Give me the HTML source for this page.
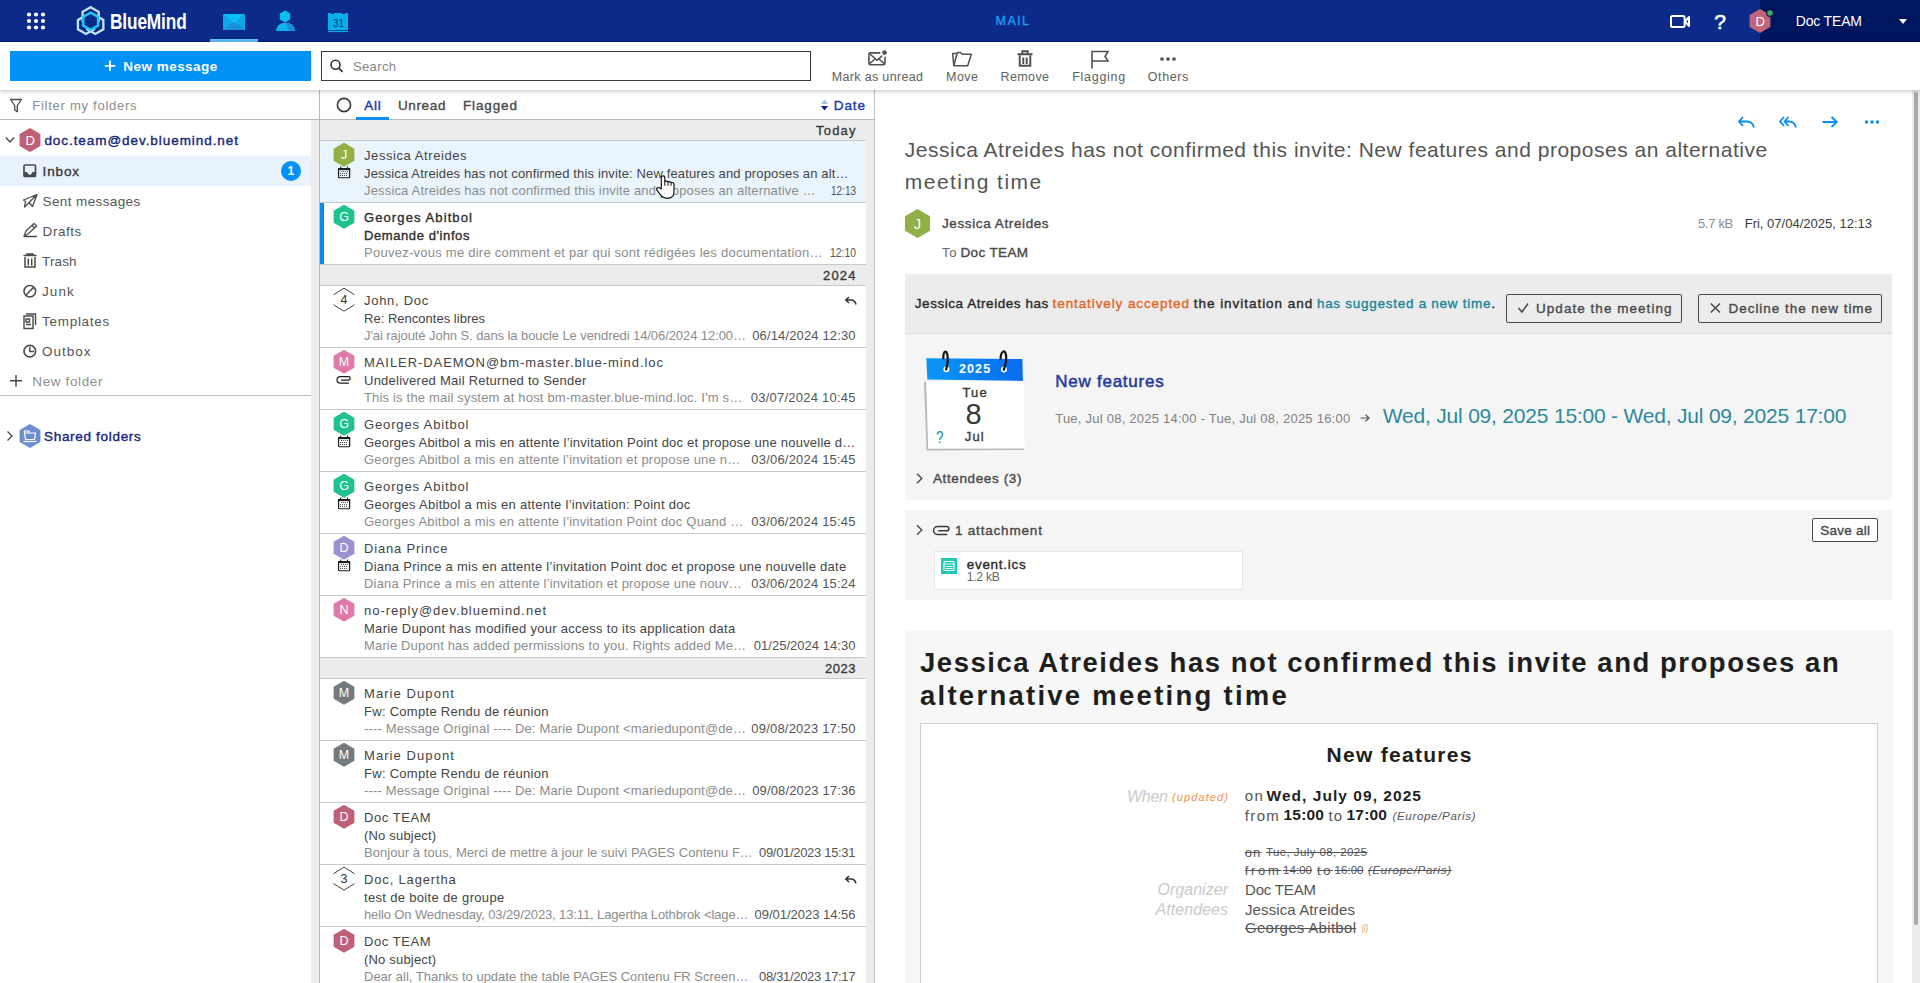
<!DOCTYPE html>
<html><head><meta charset="utf-8"><title>BlueMind Mail</title><style>*{margin:0;padding:0;box-sizing:border-box}
html,body{width:1920px;height:983px;overflow:hidden;background:#fff;font-family:"Liberation Sans",sans-serif;color:#333;position:relative}
.a{position:absolute}
.t{position:absolute;white-space:nowrap;line-height:1}
svg{position:absolute;overflow:visible}</style></head><body><div class="a" style="left:311px;top:120px;width:8px;height:863px;background:#ececec"></div><div class="a" style="left:319px;top:90px;width:1px;height:893px;background:#b9b9b9"></div><div class="a" style="left:0;top:119px;width:319px;height:1px;background:#b9b9b9"></div><div class="a" style="left:0;top:156px;width:311px;height:30px;background:#e9f3fd"></div><div class="a" style="left:0;top:395px;width:311px;height:1px;background:#bdbdbd"></div><svg style="left:0;top:0" width="320" height="460">
<path d="M10.5 99.5 H21.5 L17.3 105.5 V111.8 L14.7 109.8 V105.5 Z" fill="none" stroke="#4a4a4a" stroke-width="1.3" stroke-linejoin="round"/>
<path d="M5.8 137.5 L10 142 L14.2 137.5" fill="none" stroke="#444" stroke-width="1.3"/>
<polygon points="30.00,128.00 40.39,134.00 40.39,146.00 30.00,152.00 19.61,146.00 19.61,134.00" fill="#bf6079"/>
<rect x="24" y="165" width="11.5" height="11.5" rx="1" fill="none" stroke="#4a4a4a" stroke-width="1.7"/>
<path d="M24 172 H27 Q28 175 29.75 175 Q31.5 175 32.5 172 H35.5 V176.5 H24 Z" fill="#4a4a4a"/>
<path d="M23.5 200 L37 194.5 L32.5 206.5 L29 202.5 L24.5 207 L25.5 201.5 Z M29 202.5 L37 194.5" fill="none" stroke="#4a4a4a" stroke-width="1.3" stroke-linejoin="round"/>
<path d="M24 236.5 L26 231 L34 223.5 L36.5 226 L28.5 233.5 Z M24 236.5 H37 M32 225.5 L34.5 228" fill="none" stroke="#4a4a4a" stroke-width="1.3" stroke-linejoin="round"/>
<path d="M23.5 255.5 H36.5 M27 255 V254 H33 V255 M25 257 V267 H35 V257 M28.3 258.5 V265.5 M31.7 258.5 V265.5" fill="none" stroke="#4a4a4a" stroke-width="1.5"/>
<circle cx="29.8" cy="291.2" r="5.8" fill="none" stroke="#4a4a4a" stroke-width="1.5"/><path d="M26 295 L33.6 287.4" stroke="#4a4a4a" stroke-width="1.5"/>
<path d="M26 314 H35.5 V325 M24 316 H33 V328.5 H24 Z M26 319 H29.5 V322 H26 Z M26 324.5 H31" fill="none" stroke="#4a4a4a" stroke-width="1.4"/>
<circle cx="29.8" cy="351.2" r="5.8" fill="none" stroke="#4a4a4a" stroke-width="1.6"/><path d="M29.8 347 V351.5 H34" fill="none" stroke="#4a4a4a" stroke-width="1.5"/>
<path d="M16 375 V386.7 M10 380.8 H22" stroke="#444" stroke-width="1.4"/>
<path d="M7.5 431.5 L12 436 L7.5 440.5" fill="none" stroke="#444" stroke-width="1.3"/>
<polygon points="30.00,424.00 40.39,430.00 40.39,442.00 30.00,448.00 19.61,442.00 19.61,430.00" fill="#6d8fd2"/>
<path d="M24.5 433 H35.5 L34.5 439.5 H25.5 Z M24.5 433 V431 H28.5 L29.5 432" fill="none" stroke="#fff" stroke-width="1.2"/>
<path d="M23.5 441.5 H36.5" stroke="#fff" stroke-width="1.2"/>
</svg><div class="a" style="left:281px;top:161px;width:20px;height:20px;border-radius:50%;background:#0092f6"></div><div class="t" style="left:287.50px;top:165.44px;font-size:12px;color:#fff;font-weight:700;">1</div><div class="t" style="left:25.60px;top:134.00px;font-size:13px;color:#fff;">D</div><div class="t" style="left:32.30px;top:99.30px;font-size:13px;color:#8c8c8c;letter-spacing:0.733px;">Filter my folders</div><div class="t" style="left:44.40px;top:133.57px;font-size:13.5px;color:#14277c;letter-spacing:0.939px;-webkit-text-stroke:0.38px #14277c;">doc.team@dev.bluemind.net</div><div class="t" style="left:42.60px;top:164.97px;font-size:13.5px;color:#3a3a3a;letter-spacing:0.867px;-webkit-text-stroke:0.38px #3a3a3a;">Inbox</div><div class="t" style="left:42.60px;top:194.77px;font-size:13.5px;color:#555;letter-spacing:0.378px;">Sent messages</div><div class="t" style="left:42.60px;top:224.97px;font-size:13.5px;color:#555;letter-spacing:0.537px;">Drafts</div><div class="t" style="left:42.10px;top:255.37px;font-size:13.5px;color:#555;letter-spacing:0.096px;">Trash</div><div class="t" style="left:42.10px;top:285.37px;font-size:13.5px;color:#555;letter-spacing:1.023px;">Junk</div><div class="t" style="left:42.10px;top:315.37px;font-size:13.5px;color:#555;letter-spacing:0.696px;">Templates</div><div class="t" style="left:42.10px;top:345.37px;font-size:13.5px;color:#555;letter-spacing:0.974px;">Outbox</div><div class="t" style="left:32.30px;top:374.57px;font-size:13.5px;color:#8f8f8f;letter-spacing:0.630px;">New folder</div><div class="t" style="left:44.00px;top:429.57px;font-size:13.5px;color:#14277c;letter-spacing:0.691px;-webkit-text-stroke:0.38px #14277c;">Shared folders</div><div class="a" style="left:320px;top:90px;width:555px;height:893px;background:#fff"></div><div class="a" style="left:866px;top:120px;width:9px;height:863px;background:#ececec"></div><div class="a" style="left:874px;top:90px;width:1px;height:893px;background:#c2c2c2"></div><div class="a" style="left:320px;top:119px;width:555px;height:1px;background:#b9b9b9"></div><div class="a" style="left:320px;top:120px;width:546px;height:21px;background:#ececec;border-bottom:1px solid #c8c8c8"></div><div class="a" style="left:320px;top:141px;width:546px;height:62px;background:#eaf4fd;border-bottom:1px solid #c8c8c8"></div><div class="a" style="left:320px;top:203px;width:546px;height:62px;background:#fff;border-bottom:1px solid #c8c8c8"></div><div class="a" style="left:320px;top:203px;width:4px;height:61px;background:#0a8cf0"></div><div class="a" style="left:320px;top:265px;width:546px;height:21px;background:#ececec;border-bottom:1px solid #c8c8c8"></div><div class="a" style="left:320px;top:286px;width:546px;height:62px;background:#fff;border-bottom:1px solid #c8c8c8"></div><div class="a" style="left:320px;top:348px;width:546px;height:62px;background:#fff;border-bottom:1px solid #c8c8c8"></div><div class="a" style="left:320px;top:410px;width:546px;height:62px;background:#fff;border-bottom:1px solid #c8c8c8"></div><div class="a" style="left:320px;top:472px;width:546px;height:62px;background:#fff;border-bottom:1px solid #c8c8c8"></div><div class="a" style="left:320px;top:534px;width:546px;height:62px;background:#fff;border-bottom:1px solid #c8c8c8"></div><div class="a" style="left:320px;top:596px;width:546px;height:62px;background:#fff;border-bottom:1px solid #c8c8c8"></div><div class="a" style="left:320px;top:658px;width:546px;height:21px;background:#ececec;border-bottom:1px solid #c8c8c8"></div><div class="a" style="left:320px;top:679px;width:546px;height:62px;background:#fff;border-bottom:1px solid #c8c8c8"></div><div class="a" style="left:320px;top:741px;width:546px;height:62px;background:#fff;border-bottom:1px solid #c8c8c8"></div><div class="a" style="left:320px;top:803px;width:546px;height:62px;background:#fff;border-bottom:1px solid #c8c8c8"></div><div class="a" style="left:320px;top:865px;width:546px;height:62px;background:#fff;border-bottom:1px solid #c8c8c8"></div><div class="a" style="left:320px;top:927px;width:546px;height:62px;background:#fff;border-bottom:1px solid #c8c8c8"></div><svg style="left:0;top:0" width="900" height="983"><circle cx="344" cy="105" r="6.6" fill="none" stroke="#3a3a3a" stroke-width="1.6"/><rect x="356" y="117" width="33" height="3" fill="#0a8cf0"/><path d="M821 104 L824.5 99.5 L828 104 Z" fill="#a8bce6"/><path d="M821 106 L824.5 110.5 L828 106 Z" fill="#0a1f8a"/><polygon points="344.00,142.70 354.39,148.70 354.39,160.70 344.00,166.70 333.61,160.70 333.61,148.70" fill="#92b044"/><rect x="338.55" y="168.55" width="11.1" height="9.2" rx="1" fill="none" stroke="#1e1e1e" stroke-width="1.2"/><rect x="338" y="168.0" width="12.2" height="2.1" fill="#1e1e1e"/><path d="M340.7 166.5 V168.3 M347.5 166.5 V168.3" stroke="#1e1e1e" stroke-width="1.1"/><circle cx="341.6" cy="171.5" r="0.55" fill="#1e1e1e"/><circle cx="343.6" cy="171.5" r="0.55" fill="#1e1e1e"/><circle cx="345.6" cy="171.5" r="0.55" fill="#1e1e1e"/><circle cx="347.6" cy="171.5" r="0.55" fill="#1e1e1e"/><circle cx="340.6" cy="173.5" r="0.55" fill="#1e1e1e"/><circle cx="342.6" cy="173.5" r="0.55" fill="#1e1e1e"/><circle cx="344.6" cy="173.5" r="0.55" fill="#1e1e1e"/><circle cx="346.6" cy="173.5" r="0.55" fill="#1e1e1e"/><circle cx="340.6" cy="175.5" r="0.55" fill="#1e1e1e"/><circle cx="342.6" cy="175.5" r="0.55" fill="#1e1e1e"/><circle cx="344.6" cy="175.5" r="0.55" fill="#1e1e1e"/><circle cx="346.6" cy="175.5" r="0.55" fill="#1e1e1e"/><polygon points="344.00,204.70 354.39,210.70 354.39,222.70 344.00,228.70 333.61,222.70 333.61,210.70" fill="#1fc18e"/><path d="M333.5 294.7 L344 288.2 L354.5 294.7 M333.5 304.7 L344 311.2 L354.5 304.7" fill="none" stroke="#444" stroke-width="1"/><path d="M849 297.0 L845.8 300.0 L849 303.0 M846 300.0 H851 Q855 300.0 856 304.5" fill="none" stroke="#333" stroke-width="1.5"/><polygon points="344.00,349.70 354.39,355.70 354.39,367.70 344.00,373.70 333.61,367.70 333.61,355.70" fill="#e07aaa"/><path d="M341.3 380.1 H348.4 A1.8 1.8 0 0 0 348.4 376.5 H340.4 A3.35 3.35 0 0 0 340.4 383.2 H348.4" fill="none" stroke="#1e1e1e" stroke-width="1.25" stroke-linecap="round"/><polygon points="344.00,411.70 354.39,417.70 354.39,429.70 344.00,435.70 333.61,429.70 333.61,417.70" fill="#1fc18e"/><rect x="338.55" y="437.55" width="11.1" height="9.2" rx="1" fill="none" stroke="#1e1e1e" stroke-width="1.2"/><rect x="338" y="437.0" width="12.2" height="2.1" fill="#1e1e1e"/><path d="M340.7 435.5 V437.3 M347.5 435.5 V437.3" stroke="#1e1e1e" stroke-width="1.1"/><circle cx="341.6" cy="440.5" r="0.55" fill="#1e1e1e"/><circle cx="343.6" cy="440.5" r="0.55" fill="#1e1e1e"/><circle cx="345.6" cy="440.5" r="0.55" fill="#1e1e1e"/><circle cx="347.6" cy="440.5" r="0.55" fill="#1e1e1e"/><circle cx="340.6" cy="442.5" r="0.55" fill="#1e1e1e"/><circle cx="342.6" cy="442.5" r="0.55" fill="#1e1e1e"/><circle cx="344.6" cy="442.5" r="0.55" fill="#1e1e1e"/><circle cx="346.6" cy="442.5" r="0.55" fill="#1e1e1e"/><circle cx="340.6" cy="444.5" r="0.55" fill="#1e1e1e"/><circle cx="342.6" cy="444.5" r="0.55" fill="#1e1e1e"/><circle cx="344.6" cy="444.5" r="0.55" fill="#1e1e1e"/><circle cx="346.6" cy="444.5" r="0.55" fill="#1e1e1e"/><polygon points="344.00,473.70 354.39,479.70 354.39,491.70 344.00,497.70 333.61,491.70 333.61,479.70" fill="#1fc18e"/><rect x="338.55" y="499.55" width="11.1" height="9.2" rx="1" fill="none" stroke="#1e1e1e" stroke-width="1.2"/><rect x="338" y="499.0" width="12.2" height="2.1" fill="#1e1e1e"/><path d="M340.7 497.5 V499.3 M347.5 497.5 V499.3" stroke="#1e1e1e" stroke-width="1.1"/><circle cx="341.6" cy="502.5" r="0.55" fill="#1e1e1e"/><circle cx="343.6" cy="502.5" r="0.55" fill="#1e1e1e"/><circle cx="345.6" cy="502.5" r="0.55" fill="#1e1e1e"/><circle cx="347.6" cy="502.5" r="0.55" fill="#1e1e1e"/><circle cx="340.6" cy="504.5" r="0.55" fill="#1e1e1e"/><circle cx="342.6" cy="504.5" r="0.55" fill="#1e1e1e"/><circle cx="344.6" cy="504.5" r="0.55" fill="#1e1e1e"/><circle cx="346.6" cy="504.5" r="0.55" fill="#1e1e1e"/><circle cx="340.6" cy="506.5" r="0.55" fill="#1e1e1e"/><circle cx="342.6" cy="506.5" r="0.55" fill="#1e1e1e"/><circle cx="344.6" cy="506.5" r="0.55" fill="#1e1e1e"/><circle cx="346.6" cy="506.5" r="0.55" fill="#1e1e1e"/><polygon points="344.00,535.70 354.39,541.70 354.39,553.70 344.00,559.70 333.61,553.70 333.61,541.70" fill="#9b8fcd"/><rect x="338.55" y="561.55" width="11.1" height="9.2" rx="1" fill="none" stroke="#1e1e1e" stroke-width="1.2"/><rect x="338" y="561.0" width="12.2" height="2.1" fill="#1e1e1e"/><path d="M340.7 559.5 V561.3 M347.5 559.5 V561.3" stroke="#1e1e1e" stroke-width="1.1"/><circle cx="341.6" cy="564.5" r="0.55" fill="#1e1e1e"/><circle cx="343.6" cy="564.5" r="0.55" fill="#1e1e1e"/><circle cx="345.6" cy="564.5" r="0.55" fill="#1e1e1e"/><circle cx="347.6" cy="564.5" r="0.55" fill="#1e1e1e"/><circle cx="340.6" cy="566.5" r="0.55" fill="#1e1e1e"/><circle cx="342.6" cy="566.5" r="0.55" fill="#1e1e1e"/><circle cx="344.6" cy="566.5" r="0.55" fill="#1e1e1e"/><circle cx="346.6" cy="566.5" r="0.55" fill="#1e1e1e"/><circle cx="340.6" cy="568.5" r="0.55" fill="#1e1e1e"/><circle cx="342.6" cy="568.5" r="0.55" fill="#1e1e1e"/><circle cx="344.6" cy="568.5" r="0.55" fill="#1e1e1e"/><circle cx="346.6" cy="568.5" r="0.55" fill="#1e1e1e"/><polygon points="344.00,597.70 354.39,603.70 354.39,615.70 344.00,621.70 333.61,615.70 333.61,603.70" fill="#e07aaa"/><polygon points="344.00,680.70 354.39,686.70 354.39,698.70 344.00,704.70 333.61,698.70 333.61,686.70" fill="#737b80"/><polygon points="344.00,742.70 354.39,748.70 354.39,760.70 344.00,766.70 333.61,760.70 333.61,748.70" fill="#737b80"/><polygon points="344.00,804.70 354.39,810.70 354.39,822.70 344.00,828.70 333.61,822.70 333.61,810.70" fill="#bf6079"/><path d="M333.5 873.7 L344 867.2 L354.5 873.7 M333.5 883.7 L344 890.2 L354.5 883.7" fill="none" stroke="#444" stroke-width="1"/><path d="M849 876.0 L845.8 879.0 L849 882.0 M846 879.0 H851 Q855 879.0 856 883.5" fill="none" stroke="#333" stroke-width="1.5"/><polygon points="344.00,928.70 354.39,934.70 354.39,946.70 344.00,952.70 333.61,946.70 333.61,934.70" fill="#bf6079"/></svg><div class="t" style="left:364.20px;top:99.27px;font-size:13.5px;color:#1a3aa5;letter-spacing:0.742px;-webkit-text-stroke:0.38px #1a3aa5;">All</div><div class="t" style="left:397.90px;top:99.27px;font-size:13.5px;color:#4a4a4a;letter-spacing:0.644px;-webkit-text-stroke:0.38px #4a4a4a;">Unread</div><div class="t" style="left:463.00px;top:99.27px;font-size:13.5px;color:#4a4a4a;letter-spacing:0.867px;-webkit-text-stroke:0.38px #4a4a4a;">Flagged</div><div class="t" style="left:833.75px;top:99.27px;font-size:13.5px;color:#1a3aa5;letter-spacing:0.923px;-webkit-text-stroke:0.38px #1a3aa5;">Date</div><div class="t" style="left:816.10px;top:124.30px;font-size:13px;color:#3a3a3a;letter-spacing:1.174px;-webkit-text-stroke:0.36px #3a3a3a;">Today</div><div class="t" style="left:344.00px;top:148.72px;font-size:12.5px;color:#fff;transform:translateX(-50%);">J</div><div class="t" style="left:364.00px;top:148.70px;font-size:13px;color:#444;letter-spacing:0.577px;">Jessica Atreides</div><div class="t" style="left:364.00px;top:166.80px;font-size:13px;color:#444;letter-spacing:0.139px;">Jessica Atreides has not confirmed this invite: New features and proposes an alt…</div><div class="t" style="left:364.00px;top:184.00px;font-size:13px;color:#8c8c8c;letter-spacing:0.163px;">Jessica Atreides has not confirmed this invite and proposes an alternative …</div><div class="t" style="left:830.50px;top:184.00px;font-size:13px;color:#555;transform:scaleX(0.7681);transform-origin:0 0;">12:13</div><div class="t" style="left:344.00px;top:210.72px;font-size:12.5px;color:#fff;transform:translateX(-50%);">G</div><div class="t" style="left:364.00px;top:210.70px;font-size:13px;color:#2e2e2e;letter-spacing:1.099px;-webkit-text-stroke:0.36px #2e2e2e;">Georges Abitbol</div><div class="t" style="left:364.00px;top:228.80px;font-size:13px;color:#2e2e2e;letter-spacing:0.589px;-webkit-text-stroke:0.36px #2e2e2e;">Demande d&#x27;infos</div><div class="t" style="left:364.00px;top:246.00px;font-size:13px;color:#8c8c8c;letter-spacing:0.253px;">Pouvez-vous me dire comment et par qui sont rédigées les documentation…</div><div class="t" style="left:829.60px;top:246.00px;font-size:13px;color:#555;transform:scaleX(0.7958);transform-origin:0 0;">12:10</div><div class="t" style="left:823.10px;top:268.70px;font-size:13px;color:#3a3a3a;letter-spacing:1.159px;-webkit-text-stroke:0.36px #3a3a3a;">2024</div><div class="t" style="left:344.00px;top:293.72px;font-size:12.5px;color:#333;transform:translateX(-50%);">4</div><div class="t" style="left:364.00px;top:293.70px;font-size:13px;color:#444;letter-spacing:0.707px;">John, Doc</div><div class="t" style="left:364.00px;top:311.80px;font-size:13px;color:#444;letter-spacing:0.017px;">Re: Rencontes libres</div><div class="t" style="left:364.00px;top:329.00px;font-size:13px;color:#8c8c8c;letter-spacing:-0.078px;">J&#x27;ai rajouté John S. dans la boucle Le vendredi 14/06/2024 12:00…</div><div class="t" style="left:752.20px;top:329.00px;font-size:13px;color:#555;letter-spacing:0.139px;">06/14/2024 12:30</div><div class="t" style="left:344.00px;top:355.72px;font-size:12.5px;color:#fff;transform:translateX(-50%);">M</div><div class="t" style="left:364.00px;top:355.70px;font-size:13px;color:#444;letter-spacing:0.935px;">MAILER-DAEMON@bm-master.blue-mind.loc</div><div class="t" style="left:364.00px;top:373.80px;font-size:13px;color:#444;letter-spacing:0.247px;">Undelivered Mail Returned to Sender</div><div class="t" style="left:364.00px;top:391.00px;font-size:13px;color:#8c8c8c;letter-spacing:0.177px;">This is the mail system at host bm-master.blue-mind.loc. I&#x27;m s…</div><div class="t" style="left:750.70px;top:391.00px;font-size:13px;color:#555;letter-spacing:0.239px;">03/07/2024 10:45</div><div class="t" style="left:344.00px;top:417.72px;font-size:12.5px;color:#fff;transform:translateX(-50%);">G</div><div class="t" style="left:364.00px;top:417.70px;font-size:13px;color:#444;letter-spacing:0.856px;">Georges Abitbol</div><div class="t" style="left:364.00px;top:435.80px;font-size:13px;color:#444;letter-spacing:0.221px;">Georges Abitbol a mis en attente l’invitation Point doc et propose une nouvelle d…</div><div class="t" style="left:364.00px;top:453.00px;font-size:13px;color:#8c8c8c;letter-spacing:0.205px;">Georges Abitbol a mis en attente l’invitation et propose une n…</div><div class="t" style="left:751.30px;top:453.00px;font-size:13px;color:#555;letter-spacing:0.199px;">03/06/2024 15:45</div><div class="t" style="left:344.00px;top:479.72px;font-size:12.5px;color:#fff;transform:translateX(-50%);">G</div><div class="t" style="left:364.00px;top:479.70px;font-size:13px;color:#444;letter-spacing:0.856px;">Georges Abitbol</div><div class="t" style="left:364.00px;top:497.80px;font-size:13px;color:#444;letter-spacing:0.281px;">Georges Abitbol a mis en attente l’invitation: Point doc</div><div class="t" style="left:364.00px;top:515.00px;font-size:13px;color:#8c8c8c;letter-spacing:0.207px;">Georges Abitbol a mis en attente l’invitation Point doc Quand …</div><div class="t" style="left:751.30px;top:515.00px;font-size:13px;color:#555;letter-spacing:0.199px;">03/06/2024 15:45</div><div class="t" style="left:344.00px;top:541.72px;font-size:12.5px;color:#fff;transform:translateX(-50%);">D</div><div class="t" style="left:364.00px;top:541.70px;font-size:13px;color:#444;letter-spacing:0.815px;">Diana Prince</div><div class="t" style="left:364.00px;top:559.80px;font-size:13px;color:#444;letter-spacing:0.273px;">Diana Prince a mis en attente l’invitation Point doc et propose une nouvelle date</div><div class="t" style="left:364.00px;top:577.00px;font-size:13px;color:#8c8c8c;letter-spacing:0.182px;">Diana Prince a mis en attente l’invitation et propose une nouv…</div><div class="t" style="left:751.30px;top:577.00px;font-size:13px;color:#555;letter-spacing:0.199px;">03/06/2024 15:24</div><div class="t" style="left:344.00px;top:603.72px;font-size:12.5px;color:#fff;transform:translateX(-50%);">N</div><div class="t" style="left:364.00px;top:603.70px;font-size:13px;color:#444;letter-spacing:0.991px;">no-reply@dev.bluemind.net</div><div class="t" style="left:364.00px;top:621.80px;font-size:13px;color:#444;letter-spacing:0.285px;">Marie Dupont has modified your access to its application data</div><div class="t" style="left:364.00px;top:639.00px;font-size:13px;color:#8c8c8c;letter-spacing:0.159px;">Marie Dupont has added permissions to you. Rights added Me…</div><div class="t" style="left:753.70px;top:639.00px;font-size:13px;color:#555;letter-spacing:0.039px;">01/25/2024 14:30</div><div class="t" style="left:824.90px;top:661.70px;font-size:13px;color:#3a3a3a;letter-spacing:0.559px;-webkit-text-stroke:0.36px #3a3a3a;">2023</div><div class="t" style="left:344.00px;top:686.72px;font-size:12.5px;color:#fff;transform:translateX(-50%);">M</div><div class="t" style="left:364.00px;top:686.70px;font-size:13px;color:#444;letter-spacing:1.078px;">Marie Dupont</div><div class="t" style="left:364.00px;top:704.80px;font-size:13px;color:#444;letter-spacing:0.283px;">Fw: Compte Rendu de réunion</div><div class="t" style="left:364.00px;top:722.00px;font-size:13px;color:#8c8c8c;letter-spacing:0.159px;">---- Message Original ---- De: Marie Dupont &lt;mariedupont@de…</div><div class="t" style="left:751.30px;top:722.00px;font-size:13px;color:#555;letter-spacing:0.199px;">09/08/2023 17:50</div><div class="t" style="left:344.00px;top:748.72px;font-size:12.5px;color:#fff;transform:translateX(-50%);">M</div><div class="t" style="left:364.00px;top:748.70px;font-size:13px;color:#444;letter-spacing:1.078px;">Marie Dupont</div><div class="t" style="left:364.00px;top:766.80px;font-size:13px;color:#444;letter-spacing:0.283px;">Fw: Compte Rendu de réunion</div><div class="t" style="left:364.00px;top:784.00px;font-size:13px;color:#8c8c8c;letter-spacing:0.159px;">---- Message Original ---- De: Marie Dupont &lt;mariedupont@de…</div><div class="t" style="left:752.20px;top:784.00px;font-size:13px;color:#555;letter-spacing:0.139px;">09/08/2023 17:36</div><div class="t" style="left:344.00px;top:810.72px;font-size:12.5px;color:#fff;transform:translateX(-50%);">D</div><div class="t" style="left:364.00px;top:810.70px;font-size:13px;color:#444;letter-spacing:0.584px;">Doc TEAM</div><div class="t" style="left:364.00px;top:828.80px;font-size:13px;color:#444;letter-spacing:0.193px;">(No subject)</div><div class="t" style="left:364.00px;top:846.00px;font-size:13px;color:#8c8c8c;letter-spacing:0.052px;">Bonjour à tous, Merci de mettre à jour le suivi PAGES Contenu F…</div><div class="t" style="left:759.00px;top:846.00px;font-size:13px;color:#555;letter-spacing:-0.315px;">09/01/2023 15:31</div><div class="t" style="left:344.00px;top:872.72px;font-size:12.5px;color:#333;transform:translateX(-50%);">3</div><div class="t" style="left:364.00px;top:872.70px;font-size:13px;color:#444;letter-spacing:0.836px;">Doc, Lagertha</div><div class="t" style="left:364.00px;top:890.80px;font-size:13px;color:#444;letter-spacing:0.327px;">test de boite de groupe</div><div class="t" style="left:364.00px;top:908.00px;font-size:13px;color:#8c8c8c;letter-spacing:-0.122px;">hello On Wednesday, 03/29/2023, 13:11, Lagertha Lothbrok &lt;lage…</div><div class="t" style="left:754.60px;top:908.00px;font-size:13px;color:#555;letter-spacing:-0.021px;">09/01/2023 14:56</div><div class="t" style="left:344.00px;top:934.72px;font-size:12.5px;color:#fff;transform:translateX(-50%);">D</div><div class="t" style="left:364.00px;top:934.70px;font-size:13px;color:#444;letter-spacing:0.584px;">Doc TEAM</div><div class="t" style="left:364.00px;top:952.80px;font-size:13px;color:#444;letter-spacing:0.193px;">(No subject)</div><div class="t" style="left:364.00px;top:970.00px;font-size:13px;color:#8c8c8c;letter-spacing:-0.003px;">Dear all, Thanks to update the table PAGES Contenu FR Screen…</div><div class="t" style="left:759.00px;top:970.00px;font-size:13px;color:#555;letter-spacing:-0.315px;">08/31/2023 17:17</div><svg style="left:0;top:0" width="900" height="983"><path d="M661.3 189 V177.5 Q661.3 175.8 663.05 175.8 Q664.8 175.8 664.8 177.5 V181.6 Q666.5 180.6 668 181.8 Q669.8 181.4 671 182.6 Q673.9 182 674 184.3 V192 Q674 198.3 667 198.3 Q663 198.3 660.6 195.2 L656.9 190.2 Q655.9 188.2 658 187.6 Q659.8 187.3 661.3 189 Z" fill="#fff" stroke="#111" stroke-width="1.15" stroke-linejoin="round"/><path d="M664.8 181.6 V185.8 M668 181.8 V185.8 M671 182.6 V185.8" stroke="#111" stroke-width="1"/></svg><div class="a" style="left:1912px;top:90px;width:8px;height:893px;background:#ececec"></div><div class="a" style="left:1914px;top:92px;width:4px;height:833px;border-radius:2px;background:#a9a9a9"></div><div class="a" style="left:905px;top:274px;width:987px;height:60px;background:#ececec;border-bottom:1px solid #dedede"></div><div class="a" style="left:905px;top:334px;width:987px;height:166px;background:#f5f5f5"></div><div class="a" style="left:905px;top:510px;width:987px;height:90px;background:#f5f5f5"></div><div class="a" style="left:905px;top:630px;width:988px;height:353px;background:#f7f7f7"></div><div class="a" style="left:920px;top:723px;width:958px;height:270px;background:#fff;border:1px solid #cfcfcf"></div><div class="a" style="left:1506px;top:293.5px;width:176px;height:29px;border:1px solid #4a4a4a;border-radius:2px"></div><div class="a" style="left:1698px;top:293.5px;width:184px;height:29px;border:1px solid #4a4a4a;border-radius:2px"></div><div class="a" style="left:1812px;top:518px;width:66px;height:24px;border:1px solid #4a4a4a;border-radius:2px;background:#fff"></div><div class="a" style="left:933.5px;top:550.5px;width:309px;height:39px;background:#fff;border:1px solid #e6e6e6"></div><svg style="left:0;top:0" width="1920" height="983"><path d="M1743 117 L1739 121.5 L1743 126 M1739.5 121.5 H1747 Q1752.5 121.5 1754 127.5" fill="none" stroke="#0a8cf0" stroke-width="1.8"/><path d="M1784 117 L1780 121.5 L1784 126 M1788.5 117 L1784.5 121.5 L1788.5 126 M1785 121.5 H1789 Q1794.5 121.5 1796 127.5" fill="none" stroke="#0a8cf0" stroke-width="1.8"/><path d="M1822.5 122 H1836.5 M1831.5 117 L1836.8 122 L1831.5 127" fill="none" stroke="#0a8cf0" stroke-width="1.8"/><circle cx="1866.5" cy="122" r="1.7" fill="#0a8cf0"/><circle cx="1872" cy="122" r="1.7" fill="#0a8cf0"/><circle cx="1877.5" cy="122" r="1.7" fill="#0a8cf0"/><polygon points="917.50,209.00 930.06,216.25 930.06,230.75 917.50,238.00 904.94,230.75 904.94,216.25" fill="#90b145"/><path d="M1518.5 308 L1522 312 L1528 303.5" fill="none" stroke="#444" stroke-width="1.4"/><path d="M1710.8 303.5 L1720 312.5 M1720 303.5 L1710.8 312.5" fill="none" stroke="#444" stroke-width="1.4"/><path d="M925 382 L927.5 449.5 L1024 449" fill="none" stroke="#b9b9b9" stroke-width="2"/><polygon points="927,381 1024,382 1024.5,448.5 928,448.5" fill="#fff"/><defs><linearGradient id="cg" x1="0" x2="1"><stop offset="0" stop-color="#0998f6"/><stop offset="1" stop-color="#0a6bf0"/></linearGradient></defs><polygon points="926.3,358.3 1022.4,359.1 1022.9,380.9 927.3,379.6" fill="url(#cg)"/><circle cx="946.4" cy="369.2" r="3" fill="#fff"/><circle cx="1003.9" cy="369.5" r="3" fill="#fff"/><path d="M946.1 369.5 Q948.6 361 947.4 355 Q946.4 350.6 944.8 351.8 Q943.2 353.4 943.3 358.3" fill="none" stroke="#161616" stroke-width="2.2" stroke-linecap="round"/><path d="M1003.8 369.8 Q1006.9 361 1006 355 Q1005.2 350.8 1003.1 351.6 Q1000.7 353 1000.6 358.6" fill="none" stroke="#161616" stroke-width="2.2" stroke-linecap="round"/><path d="M1360.5 418 H1369 M1365.5 414.8 L1369 418 L1365.5 421.2" fill="none" stroke="#555" stroke-width="1.2"/><path d="M917 473.8 L921.8 478.5 L917 483.2" fill="none" stroke="#444" stroke-width="1.3"/><path d="M917 525.3 L921.8 530 L917 534.7" fill="none" stroke="#444" stroke-width="1.3"/><path d="M938.8 530.8 H946.7 A2.1 2.1 0 0 0 946.7 526.6 H937.5 A3.9 3.9 0 0 0 937.5 534.4 H946.7" fill="none" stroke="#3a3a3a" stroke-width="1.5" stroke-linecap="round"/><rect x="941" y="558" width="16" height="16" fill="#1fc9b9"/><rect x="944" y="561.5" width="10" height="9" rx="1" fill="none" stroke="#fff" stroke-width="1.1"/><path d="M944 564 H954 M945.8 566.5 H952.5 M945.8 568.5 H952.5" stroke="#fff" stroke-width="0.9"/></svg><div class="t" style="left:904.80px;top:139.22px;font-size:21px;color:#555;letter-spacing:0.507px;">Jessica Atreides has not confirmed this invite: New features and proposes an alternative</div><div class="t" style="left:904.80px;top:170.72px;font-size:21px;color:#555;letter-spacing:1.471px;">meeting time</div><div class="t" style="left:917.50px;top:216.65px;font-size:14px;color:#fff;transform:translateX(-50%);">J</div><div class="t" style="left:942.00px;top:216.57px;font-size:13.5px;color:#4a4a4a;letter-spacing:0.604px;-webkit-text-stroke:0.38px #4a4a4a;">Jessica Atreides</div><div class="t" style="left:1698.00px;top:217.00px;font-size:13px;color:#8c8c8c;letter-spacing:-0.312px;">5.7 kB</div><div class="t" style="left:1744.70px;top:217.00px;font-size:13px;color:#3a3a3a;letter-spacing:0.009px;">Fri, 07/04/2025, 12:13</div><div class="t" style="left:942.00px;top:246.00px;font-size:13px;color:#666;letter-spacing:0.866px;">To</div><div class="t" style="left:960.50px;top:245.57px;font-size:13.5px;color:#4a4a4a;letter-spacing:0.355px;-webkit-text-stroke:0.38px #4a4a4a;">Doc TEAM</div><div class="t" style="left:914.80px;top:297.17px;font-size:13.5px;color:#2a2a2a;letter-spacing:0.549px;-webkit-text-stroke:0.38px #2a2a2a;">Jessica Atreides has</div><div class="t" style="left:1052.60px;top:297.17px;font-size:13.5px;color:#e2661f;letter-spacing:0.899px;-webkit-text-stroke:0.38px #e2661f;">tentatively accepted</div><div class="t" style="left:1193.80px;top:297.17px;font-size:13.5px;color:#2a2a2a;letter-spacing:0.960px;-webkit-text-stroke:0.38px #2a2a2a;">the invitation and</div><div class="t" style="left:1316.90px;top:297.17px;font-size:13.5px;color:#19869a;letter-spacing:0.728px;-webkit-text-stroke:0.38px #19869a;">has suggested a new time</div><div class="t" style="left:1491.50px;top:297.17px;font-size:13.5px;color:#2a2a2a;-webkit-text-stroke:0.38px #2a2a2a;">.</div><div class="t" style="left:1536.00px;top:301.87px;font-size:13.5px;color:#4a4a4a;letter-spacing:1.039px;-webkit-text-stroke:0.38px #4a4a4a;">Update the meeting</div><div class="t" style="left:1728.50px;top:301.87px;font-size:13.5px;color:#4a4a4a;letter-spacing:0.962px;-webkit-text-stroke:0.38px #4a4a4a;">Decline the new time</div><div class="t" style="left:958.90px;top:363.12px;font-size:12.5px;color:#fff;font-weight:700;letter-spacing:1.163px;">2025</div><div class="t" style="left:962.50px;top:386.00px;font-size:13px;color:#3a3a3a;letter-spacing:1.139px;-webkit-text-stroke:0.36px #3a3a3a;">Tue</div><div class="t" style="left:965.40px;top:400.15px;font-size:29px;color:#3a3a3a;letter-spacing:1.759px;">8</div><div class="t" style="left:964.80px;top:429.60px;font-size:13px;color:#3a3a3a;letter-spacing:1.137px;-webkit-text-stroke:0.36px #3a3a3a;">Jul</div><div class="t" style="left:935.50px;top:429.66px;font-size:16px;color:#138fa0;transform:scaleX(0.8421);transform-origin:0 0;">?</div><div class="t" style="left:1055.20px;top:372.61px;font-size:17px;color:#1e3a9c;letter-spacing:0.757px;-webkit-text-stroke:0.48px #1e3a9c;">New features</div><div class="t" style="left:1055.20px;top:411.90px;font-size:13px;color:#808080;letter-spacing:0.238px;">Tue, Jul 08, 2025 14:00 - Tue, Jul 08, 2025 16:00</div><div class="t" style="left:1382.80px;top:405.42px;font-size:21px;color:#2b8a9c;letter-spacing:-0.200px;">Wed, Jul 09, 2025 15:00 - Wed, Jul 09, 2025 17:00</div><div class="t" style="left:933.00px;top:472.07px;font-size:13.5px;color:#4a4a4a;letter-spacing:0.613px;-webkit-text-stroke:0.38px #4a4a4a;">Attendees (3)</div><div class="t" style="left:954.90px;top:523.57px;font-size:13.5px;color:#4a4a4a;letter-spacing:0.814px;-webkit-text-stroke:0.38px #4a4a4a;">1 attachment</div><div class="t" style="left:966.70px;top:557.57px;font-size:13.5px;color:#2a2a2a;letter-spacing:0.715px;-webkit-text-stroke:0.38px #2a2a2a;">event.ics</div><div class="t" style="left:966.70px;top:571.24px;font-size:12px;color:#666;letter-spacing:-0.206px;">1.2 kB</div><div class="t" style="left:1820.20px;top:523.77px;font-size:13.5px;color:#4a4a4a;letter-spacing:0.253px;-webkit-text-stroke:0.38px #4a4a4a;">Save all</div><div class="t" style="left:920.00px;top:648.52px;font-size:27.5px;color:#1e1e1e;font-weight:700;letter-spacing:1.524px;">Jessica Atreides has not confirmed this invite and proposes an</div><div class="t" style="left:920.00px;top:682.22px;font-size:27.5px;color:#1e1e1e;font-weight:700;letter-spacing:2.260px;">alternative meeting time</div><div class="t" style="left:1326.50px;top:744.22px;font-size:21px;color:#1e1e1e;font-weight:700;letter-spacing:1.298px;">New features</div><div class="t" style="left:1127.00px;top:788.76px;font-size:16px;color:#c9c9c9;font-style:italic;letter-spacing:-0.266px;">When</div><div class="t" style="left:1172.00px;top:791.69px;font-size:11px;color:#f0924a;font-style:italic;letter-spacing:1.113px;">(updated)</div><div class="t" style="left:1244.80px;top:788.30px;font-size:15px;color:#555;letter-spacing:1.312px;">on</div><div class="t" style="left:1266.50px;top:787.88px;font-size:15.5px;color:#1e1e1e;font-weight:700;letter-spacing:1.046px;">Wed, July 09, 2025</div><div class="t" style="left:1244.80px;top:807.90px;font-size:15px;color:#555;letter-spacing:1.333px;">from</div><div class="t" style="left:1283.50px;top:807.48px;font-size:15.5px;color:#1e1e1e;font-weight:700;letter-spacing:0.211px;">15:00</div><div class="t" style="left:1328.50px;top:807.90px;font-size:15px;color:#555;letter-spacing:0.984px;">to</div><div class="t" style="left:1346.50px;top:807.48px;font-size:15.5px;color:#1e1e1e;font-weight:700;letter-spacing:0.211px;">17:00</div><div class="t" style="left:1392.50px;top:810.87px;font-size:11.5px;color:#555;font-style:italic;letter-spacing:0.681px;">(Europe/Paris)</div><div class="t" style="left:1244.80px;top:846.00px;font-size:13px;color:#555;letter-spacing:1.031px;text-decoration:line-through;">on</div><div class="t" style="left:1266.00px;top:847.27px;font-size:11.5px;color:#555;letter-spacing:0.400px;text-decoration:line-through;">Tue, July 08, 2025</div><div class="t" style="left:1244.80px;top:864.00px;font-size:13px;color:#555;letter-spacing:2.667px;text-decoration:line-through;">from</div><div class="t" style="left:1283.00px;top:865.27px;font-size:11.5px;color:#555;letter-spacing:0.055px;text-decoration:line-through;">14:00</div><div class="t" style="left:1317.00px;top:864.00px;font-size:13px;color:#555;letter-spacing:2.656px;text-decoration:line-through;">to</div><div class="t" style="left:1334.50px;top:865.27px;font-size:11.5px;color:#555;letter-spacing:0.055px;text-decoration:line-through;">16:00</div><div class="t" style="left:1368.00px;top:865.27px;font-size:11.5px;color:#555;font-style:italic;letter-spacing:0.681px;text-decoration:line-through;">(Europe/Paris)</div><div class="t" style="left:1157.50px;top:882.26px;font-size:16px;color:#c9c9c9;font-style:italic;letter-spacing:0.031px;">Organizer</div><div class="t" style="left:1245.00px;top:881.80px;font-size:15px;color:#555;letter-spacing:-0.179px;">Doc TEAM</div><div class="t" style="left:1155.50px;top:902.36px;font-size:16px;color:#c9c9c9;font-style:italic;letter-spacing:0.055px;">Attendees</div><div class="t" style="left:1245.00px;top:901.90px;font-size:15px;color:#555;letter-spacing:0.107px;">Jessica Atreides</div><div class="t" style="left:1245.00px;top:919.80px;font-size:15px;color:#555;letter-spacing:0.304px;text-decoration:line-through;">Georges Abitbol</div><div class="t" style="left:1361.50px;top:924.03px;font-size:10px;color:#f0924a;font-style:italic;transform:scaleX(0.6347);transform-origin:0 0;">(/)</div><div class="a" style="left:0;top:42px;width:1920px;height:48px;background:#fff;box-shadow:0 1px 5px rgba(0,0,0,.25);z-index:3"></div><div class="a" style="left:10px;top:51px;width:301px;height:30px;background:#0092f6;z-index:4;"></div><svg style="left:0;top:0;z-index:4;" width="330" height="90"><path d="M110 60.5 V71 M104.8 65.8 H115.2" stroke="#fff" stroke-width="1.8"/></svg><div class="t" style="left:123.30px;top:60.17px;font-size:13.5px;color:#fff;font-weight:700;letter-spacing:0.469px;z-index:4;">New message</div><div class="a" style="left:321px;top:51px;width:490px;height:30px;border:1px solid #3c3c3c;z-index:4;"></div><svg style="left:0;top:0;z-index:4;" width="900" height="90"><circle cx="335.5" cy="64.8" r="4.5" fill="none" stroke="#333" stroke-width="1.6"/><path d="M338.8 68.1 L342.5 71.8" stroke="#333" stroke-width="1.8"/></svg><div class="t" style="left:353.00px;top:60.30px;font-size:13px;color:#888;letter-spacing:0.359px;z-index:4;">Search</div><svg style="left:0;top:0;z-index:4;" width="1300" height="90">
<path d="M879.7 52.9 H870.5 Q868.9 52.9 868.9 54.5 V63.2 Q868.9 64.8 870.5 64.8 H883.4 Q885 64.8 885 63.2 V57.2" fill="none" stroke="#505050" stroke-width="1.6" stroke-linecap="round"/>
<path d="M870 54 L877 60.3 L881.7 56.1 M869.8 63.3 L875.2 59 M883.8 63.3 L879.2 59.2" fill="none" stroke="#505050" stroke-width="1.5" stroke-linecap="round"/>
<circle cx="884.5" cy="52.6" r="2.3" fill="#505050"/>
<path d="M953.8 65.7 L952.7 53.6 H956.5 M953.8 65.7 L957.4 52.5 H960.5 L962.3 54.3 H971.3 L967.7 65.7 Z" fill="none" stroke="#505050" stroke-width="1.5" stroke-linejoin="round"/>
<path d="M1017.5 54.2 H1032.5 M1022.3 53.5 V51.2 H1027.7 V53.5 M1019.7 55.5 V65.8 H1030.3 V55.5 M1023.3 57.5 V64 M1026.7 57.5 V64" fill="none" stroke="#505050" stroke-width="1.9"/>
<path d="M1092 68.5 V51.5 H1108 L1105 56.5 L1108 61 H1092" fill="none" stroke="#505050" stroke-width="1.6" stroke-linejoin="miter"/>
<circle cx="1162" cy="59" r="1.85" fill="#505050"/><circle cx="1168" cy="59" r="1.85" fill="#505050"/><circle cx="1174" cy="59" r="1.85" fill="#505050"/>
</svg><div class="t" style="left:831.70px;top:71.02px;font-size:12.5px;color:#606060;letter-spacing:0.342px;z-index:4;">Mark as unread</div><div class="t" style="left:946.00px;top:71.02px;font-size:12.5px;color:#606060;letter-spacing:0.474px;z-index:4;">Move</div><div class="t" style="left:1000.60px;top:71.02px;font-size:12.5px;color:#606060;letter-spacing:0.371px;z-index:4;">Remove</div><div class="t" style="left:1072.30px;top:71.02px;font-size:12.5px;color:#606060;letter-spacing:0.692px;z-index:4;">Flagging</div><div class="t" style="left:1147.80px;top:71.02px;font-size:12.5px;color:#606060;letter-spacing:0.597px;z-index:4;">Others</div><div class="a" style="left:0;top:0;width:1920px;height:42px;background:#0c2a87"></div><div class="a" style="left:1760px;top:0;width:160px;height:42px;background:#00155f"></div><div class="a" style="left:0;top:41px;width:1760px;height:1px;background:#001a84"></div><div class="a" style="left:1760px;top:41px;width:160px;height:1px;background:#000a5a"></div><svg style="left:0;top:0" width="60" height="42"><circle cx="29" cy="14.5" r="2.1" fill="#fff"/><circle cx="29" cy="21" r="2.1" fill="#fff"/><circle cx="29" cy="27.5" r="2.1" fill="#fff"/><circle cx="36" cy="14.5" r="2.1" fill="#fff"/><circle cx="36" cy="21" r="2.1" fill="#fff"/><circle cx="36" cy="27.5" r="2.1" fill="#fff"/><circle cx="43" cy="14.5" r="2.1" fill="#fff"/><circle cx="43" cy="21" r="2.1" fill="#fff"/><circle cx="43" cy="27.5" r="2.1" fill="#fff"/></svg><svg style="left:0;top:0" width="110" height="42">
<polygon points="90.65,7.20 98.70,11.85 98.70,21.15 90.65,25.80 82.60,21.15 82.60,11.85" fill="none" stroke="#c3e4f6" stroke-width="2.3"/>
<polygon points="86.00,15.30 94.05,19.95 94.05,29.25 86.00,33.90 77.95,29.25 77.95,19.95" fill="none" stroke="#c3e4f6" stroke-width="2.3"/>
<polygon points="95.30,15.30 103.35,19.95 103.35,29.25 95.30,33.90 87.25,29.25 87.25,19.95" fill="none" stroke="#c3e4f6" stroke-width="2.3"/>
<polygon points="90.65,12.70 98.10,17.00 98.10,25.60 90.65,29.90 83.20,25.60 83.20,17.00" fill="#0c2a87" stroke="#1fc6ef" stroke-width="2.5"/>
</svg><div class="t" style="left:110.00px;top:11.50px;font-size:21.5px;color:#fff;font-weight:700;transform:scaleX(0.805);transform-origin:0 0;letter-spacing:-0.2px;">BlueMind</div><svg style="left:0;top:0" width="400" height="42">
<rect x="223" y="14" width="22" height="16" rx="1.2" fill="#1b8fd9"/>
<polygon points="223,14.5 234,23.5 245,14.5 245,30 223,30" fill="#0aa7ea"/>
<polygon points="223,30 234,21.5 245,30" fill="#1b8fd9"/>
<polygon points="223,14 245,14 234,23" fill="#08c2f3"/>
<rect x="210" y="39" width="48" height="3" fill="#5fc0f8"/>
<polygon points="285.00,10.50 290.20,13.50 290.20,19.50 285.00,22.50 279.80,19.50 279.80,13.50" fill="#08bff2"/>
<path d="M275.9 31 Q276.5 23 285.5 22.8 Q294.6 23 295.2 31 Z" fill="#0fb4ee"/>
<path d="M285.5 22.8 L289 31 L295.2 31 Q294.6 23 285.5 22.8 Z" fill="#1c8ed8"/>
<rect x="328" y="13" width="20" height="17" fill="#08aeea"/>
<rect x="328" y="30.8" width="20" height="1.3" fill="#08aeea"/>
<rect x="331" y="12" width="3" height="2" fill="#0c2a87"/><rect x="342" y="12" width="3" height="2" fill="#0c2a87"/>
</svg><div class="t" style="left:332.50px;top:17.77px;font-size:11.5px;color:#08307a;transform:scaleX(0.85);transform-origin:0 0;">31</div><div class="t" style="left:995.60px;top:15.42px;font-size:12.5px;color:#1d9cf2;letter-spacing:1.371px;-webkit-text-stroke:0.35px #1d9cf2;">MAIL</div><svg style="left:0;top:0" width="1920" height="42">
<rect x="1671" y="16" width="13.6" height="10.9" rx="1.5" fill="none" stroke="#fff" stroke-width="2"/>
<path d="M1685 21.5 L1689 17 L1689 26 Z" fill="none" stroke="#fff" stroke-width="2" stroke-linejoin="round"/>
<polygon points="1760.00,9.00 1770.39,15.00 1770.39,27.00 1760.00,33.00 1749.61,27.00 1749.61,15.00" fill="#c0657b"/>
<circle cx="1770" cy="13" r="3.3" fill="#4bab5c" stroke="#00155f" stroke-width="1.2"/>
<polygon points="1899,19 1907,19 1903,24" fill="#fff"/>
</svg><div class="t" style="left:1714.30px;top:11.42px;font-size:21px;color:#fff;-webkit-text-stroke:0.59px #fff;">?</div><div class="t" style="left:1755.50px;top:14.60px;font-size:13px;color:#fff;">D</div><div class="t" style="left:1795.80px;top:14.15px;font-size:14px;color:#fff;letter-spacing:-0.177px;">Doc TEAM</div></body></html>
